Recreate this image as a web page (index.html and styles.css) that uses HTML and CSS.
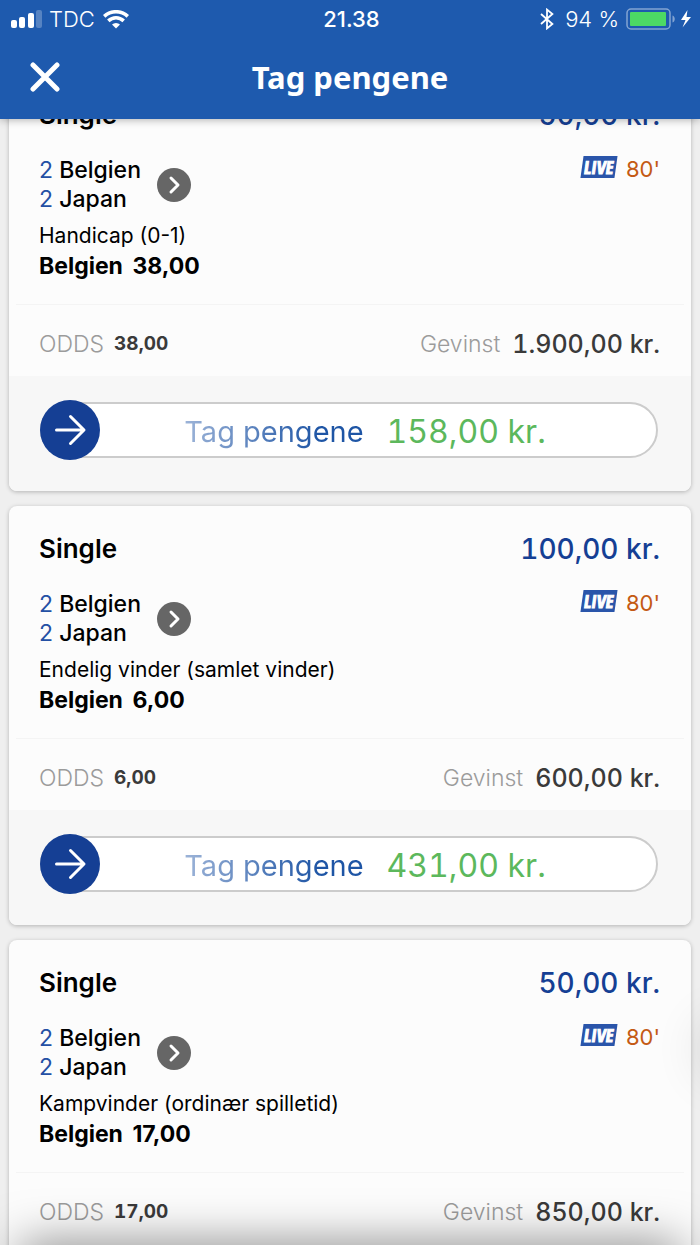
FILE: index.html
```html
<!doctype html>
<html lang="da">

<head>
    <meta charset="utf-8">
    <meta name="viewport" content="width=device-width, initial-scale=1">
    <title>Tag pengene</title>
    <link rel="stylesheet" href="styles.css">
</head>

<body>
<header class="top">
    <div class="status">
        <div class="status-left">
            <svg width="31" height="19" viewBox="0 0 31 19" fill="#fff" aria-hidden="true">
                <rect x="0" y="10" width="6" height="8" rx="2"/>
                <rect x="8" y="7" width="6" height="11" rx="2"/>
                <rect x="17" y="3" width="6" height="15" rx="2"/>
                <rect x="25" y="0" width="6" height="18" rx="2" opacity=".25"/>
            </svg>
            <span>TDC</span>
            <svg class="wifi" width="28" height="19" viewBox="-1 0 28 19" fill="none" stroke="#fff" stroke-width="3.6" aria-hidden="true">
                <path d="M1.200 6.300C8 .2 18 .2 24.800 6.300"/>
                <path d="M5.300 10.900c4.600-4.200 10.800-4.200 15.400 0"/>
                <path d="M13 18.600 9 14.600a5.700 5.700 0 0 1 8 0z" fill="#fff" stroke="none"/>
            </svg>
        </div>
        <span class="clock">21.38</span>
        <div class="status-right">
            <svg width="14" height="22" viewBox="0 0 14 22" fill="none" stroke="#fff" stroke-width="1.8" aria-hidden="true">
                <path d="M1 6l11.400 10L7 20.400V1.600L12.400 6 1 16"/>
            </svg>
            <span>94 %</span>
            <svg class="battery" width="66" height="22" viewBox="0 0 66 22" aria-hidden="true">
                <rect x="1" y="1" width="43" height="20" rx="4" fill="none" stroke="#fff" stroke-width="1.5" opacity=".45"/>
                <rect x="4" y="4" width="36" height="14" rx="1" fill="#4cd964"/>
                <path d="M46.500 7.500c3 1 3 6 0 7z" fill="#fff" opacity=".45"/>
                <path d="M61.500 2 55 12h4.500L56.500 19.500 65 9h-4.500z" fill="#fff"/>
            </svg>
        </div>
    </div>
    <div class="bar">
        <button type="button" class="close" aria-label="Luk">
            <svg width="30" height="30" viewBox="0 0 30 30" fill="none" stroke="#fff" stroke-width="5" stroke-linecap="round">
                <path d="M3 3l24 24M27 3L3 27"/>
            </svg>
        </button>
        <h1>Tag pengene</h1>
    </div>
</header>

<main class="bets">
    <div class="list">
        <article class="card">
            <div class="card-body">
                <div class="row">
                    <h2>Single</h2>
                    <span class="stake">50,00 kr.</span>
                </div>
                <div class="row match">
                    <div class="teams">
                        <ul>
                            <li><span class="score">2</span> Belgien</li>
                            <li><span class="score">2</span> Japan</li>
                        </ul>
                        <button type="button" class="more" aria-label="Vis kamp">
                            <svg width="34" height="34" viewBox="0 0 34 34" fill="none" stroke="#fff" stroke-width="3" stroke-linecap="round" stroke-linejoin="round">
                                <path d="M14 10l7 7-7 7"/>
                            </svg>
                        </button>
                    </div>
                    <div class="time"><span class="live">LIVE</span>80'</div>
                </div>
                <p class="market">Handicap (0-1)</p>
                <p class="pick">Belgien <span>38,00</span></p>
            </div>
            <div class="row totals">
                <p><span class="muted">ODDS</span><b>38,00</b></p>
                <p><span class="muted">Gevinst</span><span class="win">1.900,00 kr.</span></p>
            </div>
            <div class="card-foot">
                <input type="range" id="cash-1" min="0" max="100" value="0">
                <label for="cash-1"><span class="cta">Tag pengene</span><span class="offer">158,00 kr.</span></label>
            </div>
        </article>

        <article class="card">
            <div class="card-body">
                <div class="row">
                    <h2>Single</h2>
                    <span class="stake">100,00 kr.</span>
                </div>
                <div class="row match">
                    <div class="teams">
                        <ul>
                            <li><span class="score">2</span> Belgien</li>
                            <li><span class="score">2</span> Japan</li>
                        </ul>
                        <button type="button" class="more" aria-label="Vis kamp">
                            <svg width="34" height="34" viewBox="0 0 34 34" fill="none" stroke="#fff" stroke-width="3" stroke-linecap="round" stroke-linejoin="round">
                                <path d="M14 10l7 7-7 7"/>
                            </svg>
                        </button>
                    </div>
                    <div class="time"><span class="live">LIVE</span>80'</div>
                </div>
                <p class="market">Endelig vinder (samlet vinder)</p>
                <p class="pick">Belgien <span>6,00</span></p>
            </div>
            <div class="row totals">
                <p><span class="muted">ODDS</span><b>6,00</b></p>
                <p><span class="muted">Gevinst</span><span class="win">600,00 kr.</span></p>
            </div>
            <div class="card-foot">
                <input type="range" id="cash-2" min="0" max="100" value="0">
                <label for="cash-2"><span class="cta">Tag pengene</span><span class="offer">431,00 kr.</span></label>
            </div>
        </article>

        <article class="card">
            <div class="card-body">
                <div class="row">
                    <h2>Single</h2>
                    <span class="stake">50,00 kr.</span>
                </div>
                <div class="row match">
                    <div class="teams">
                        <ul>
                            <li><span class="score">2</span> Belgien</li>
                            <li><span class="score">2</span> Japan</li>
                        </ul>
                        <button type="button" class="more" aria-label="Vis kamp">
                            <svg width="34" height="34" viewBox="0 0 34 34" fill="none" stroke="#fff" stroke-width="3" stroke-linecap="round" stroke-linejoin="round">
                                <path d="M14 10l7 7-7 7"/>
                            </svg>
                        </button>
                    </div>
                    <div class="time"><span class="live">LIVE</span>80'</div>
                </div>
                <p class="market">Kampvinder (ordinær spilletid)</p>
                <p class="pick">Belgien <span>17,00</span></p>
            </div>
            <div class="row totals">
                <p><span class="muted">ODDS</span><b>17,00</b></p>
                <p><span class="muted">Gevinst</span><span class="win">850,00 kr.</span></p>
            </div>
        </article>
    </div>
</main>
</body>
</html>
```
FILE: styles.css
```css
:root {
    --color-bg: #efefef;
    --color-card: #fcfcfc;
    --color-foot: #f7f7f7;
    --color-bar: #1e5aae;
    --color-blue: #153f94;
    --color-green: #5cb85c;
    --color-orange: #c45a14;
    --color-muted: #9b9b9b;
    --color-dark: #3a3a3a;

    --font-ui: Inter, "Liberation Sans", sans-serif;
    --font-title: "Noto Sans", "Open Sans", sans-serif;
    --font-narrow: "Liberation Sans Narrow", "Open Sans Condensed", "Roboto Condensed", Roboto, sans-serif;
}

*, *::before, *::after {
    box-sizing: border-box;
}

body {
    display: flex;
    flex-direction: column;
    height: 100vh;
    margin: 0;
    overflow: hidden;
    background: var(--color-bg);
    color: #000;
    font-family: var(--font-ui);
}

h1, h2, p, ul {
    margin: 0;
    padding: 0;
}

button {
    padding: 0;
    border: none;
    background: none;
    cursor: pointer;
}

svg {
    display: block;
}

/* Header */
.top {
    position: relative;
    z-index: 1;
    flex: none;
    background: var(--color-bar);
    color: #fff;
    box-shadow: 0 1px 8px rgb(0 0 0 / 0.3);
}

.status {
    display: grid;
    grid-template-columns: 1fr auto 1fr;
    align-items: center;
    height: 38px;
    padding: 0 8px 0 11px;
    font-size: 22px;
    font-weight: 300;
}

.status-left,
.status-right {
    display: flex;
    align-items: center;
    gap: 7px;
}

.status-right {
    justify-content: flex-end;
}

.status-right svg:first-child {
    margin-right: 4px;
}

.clock {
    font-weight: 500;
}

.bar {
    display: grid;
    grid-template-columns: 60px 1fr 60px;
    align-items: center;
    height: 81px;
    padding-bottom: 3px;
}

.close {
    justify-self: end;
}

h1 {
    font-family: var(--font-title);
    font-size: 31px;
    font-weight: 700;
    line-height: 40px;
    text-align: center;
}

/* Bet list */
.bets {
    position: relative;
    flex: 1;
    min-height: 0;
    overflow: hidden;
}

/* bottom and side shading */
.bets::before,
.bets::after {
    content: "";
    position: absolute;
    z-index: 1;
    pointer-events: none;
}

.bets::before {
    top: 100%;
    left: 20px;
    right: 20px;
    height: 40px;
    box-shadow: 0 0 48px 0 rgb(0 0 0 / 0.5);
}

.bets::after {
    top: 900px;
    left: 100%;
    width: 60px;
    height: 60px;
    border-radius: 50%;
    box-shadow: 0 0 50px 0 rgb(0 0 0 / 0.12);
}

.list {
    display: flex;
    flex-direction: column;
    gap: 15px;
    margin-top: -47px;
    padding: 0 9px;
}

.card {
    overflow: hidden;
    flex: none;
    min-height: 419px;
    border-radius: 8px;
    background: var(--color-card);
    box-shadow: 0 1px 4px rgb(0 0 0 / 0.25);
}

.card-body {
    padding: 25px 31px 23px 30px;
}

.row {
    display: flex;
    justify-content: space-between;
    align-items: center;
}

h2 {
    font-size: 26px;
    font-weight: 600;
    line-height: 36px;
}

.stake,
.win,
.offer,
.totals b {
    font-feature-settings: "tnum";
}

.stake {
    color: var(--color-blue);
    font-size: 28px;
    font-weight: 500;
    line-height: 36px;
}

.match {
    align-items: flex-start;
    margin: 23px 0 7px;
}

.teams {
    display: flex;
    align-items: center;
    gap: 16px;
}

.teams ul {
    list-style: none;
    font-size: 23px;
    font-weight: 500;
    line-height: 29px;
}

.score {
    color: #2450a4;
    font-weight: 400;
}

.more {
    border-radius: 50%;
    background: #666;
}

.time {
    display: flex;
    align-items: center;
    gap: 10px;
    color: var(--color-orange);
    font-size: 22px;
    line-height: 24px;
}

.live {
    width: 34px;
    height: 22px;
    margin-bottom: 4px;
    background: #2a55aa;
    color: #fff;
    font-family: var(--font-narrow);
    font-size: 18px;
    font-weight: 900;
    -webkit-text-stroke: 1px #fff;
    line-height: 22px;
    text-align: center;
    transform: skewX(-8deg);
}

.market {
    font-size: 21px;
    line-height: 30px;
}

.pick {
    font-size: 23px;
    font-weight: 700;
    line-height: 30px;
}

.pick span {
    margin-left: 4px;
}

.totals {
    margin: 0 7px;
    padding: 23px 24px 16px 23px;
    border-top: 1px solid #f4f4f4;
}

.totals p {
    display: flex;
    align-items: center;
    gap: 10px;
    line-height: 32px;
}

.totals p:last-child {
    gap: 12px;
}

.muted {
    color: var(--color-muted);
    font-size: 23px;
    font-weight: 300;
}

.totals b {
    color: var(--color-dark);
    font-size: 19px;
    font-weight: 700;
}

.win {
    color: var(--color-dark);
    font-size: 25px;
    font-weight: 500;
}

/* Swipe to cash out */
.card-foot {
    display: grid;
    padding: 24px 33px 31px 31px;
    background: var(--color-foot);
}

.card-foot input,
.card-foot label {
    grid-area: 1 / 1;
}

.card-foot input {
    appearance: none;
    width: 100%;
    height: 60px;
    margin: 0;
    background: none;
}

.card-foot input::-webkit-slider-runnable-track {
    height: 56px;
    border: 2px solid #ccc;
    border-radius: 28px;
    background: #fff;
}

.card-foot input::-webkit-slider-thumb {
    appearance: none;
    width: 60px;
    height: 60px;
    margin: -4px 0 0 -2px;
    border: none;
    border-radius: 50%;
    background: var(--color-blue) url("data:image/svg+xml,%3Csvg xmlns='http://www.w3.org/2000/svg' viewBox='0 0 60 60' fill='none' stroke='%23fff' stroke-width='3' stroke-linecap='round' stroke-linejoin='round'%3E%3Cpath d='M16.500 30H43M30.500 16.500L44 30L30.500 43.500'/%3E%3C/svg%3E");
}

.card-foot label {
    display: flex;
    justify-content: center;
    align-items: center;
    gap: 23px;
    padding: 2px 0 0 32px;
    pointer-events: none;
}

.cta {
    background: linear-gradient(90deg, #9db4d8, #1e55a5 75%);
    background-clip: text;
    color: transparent;
    font-size: 29px;
}

.offer {
    color: var(--color-green);
    font-size: 32px;
}
```
